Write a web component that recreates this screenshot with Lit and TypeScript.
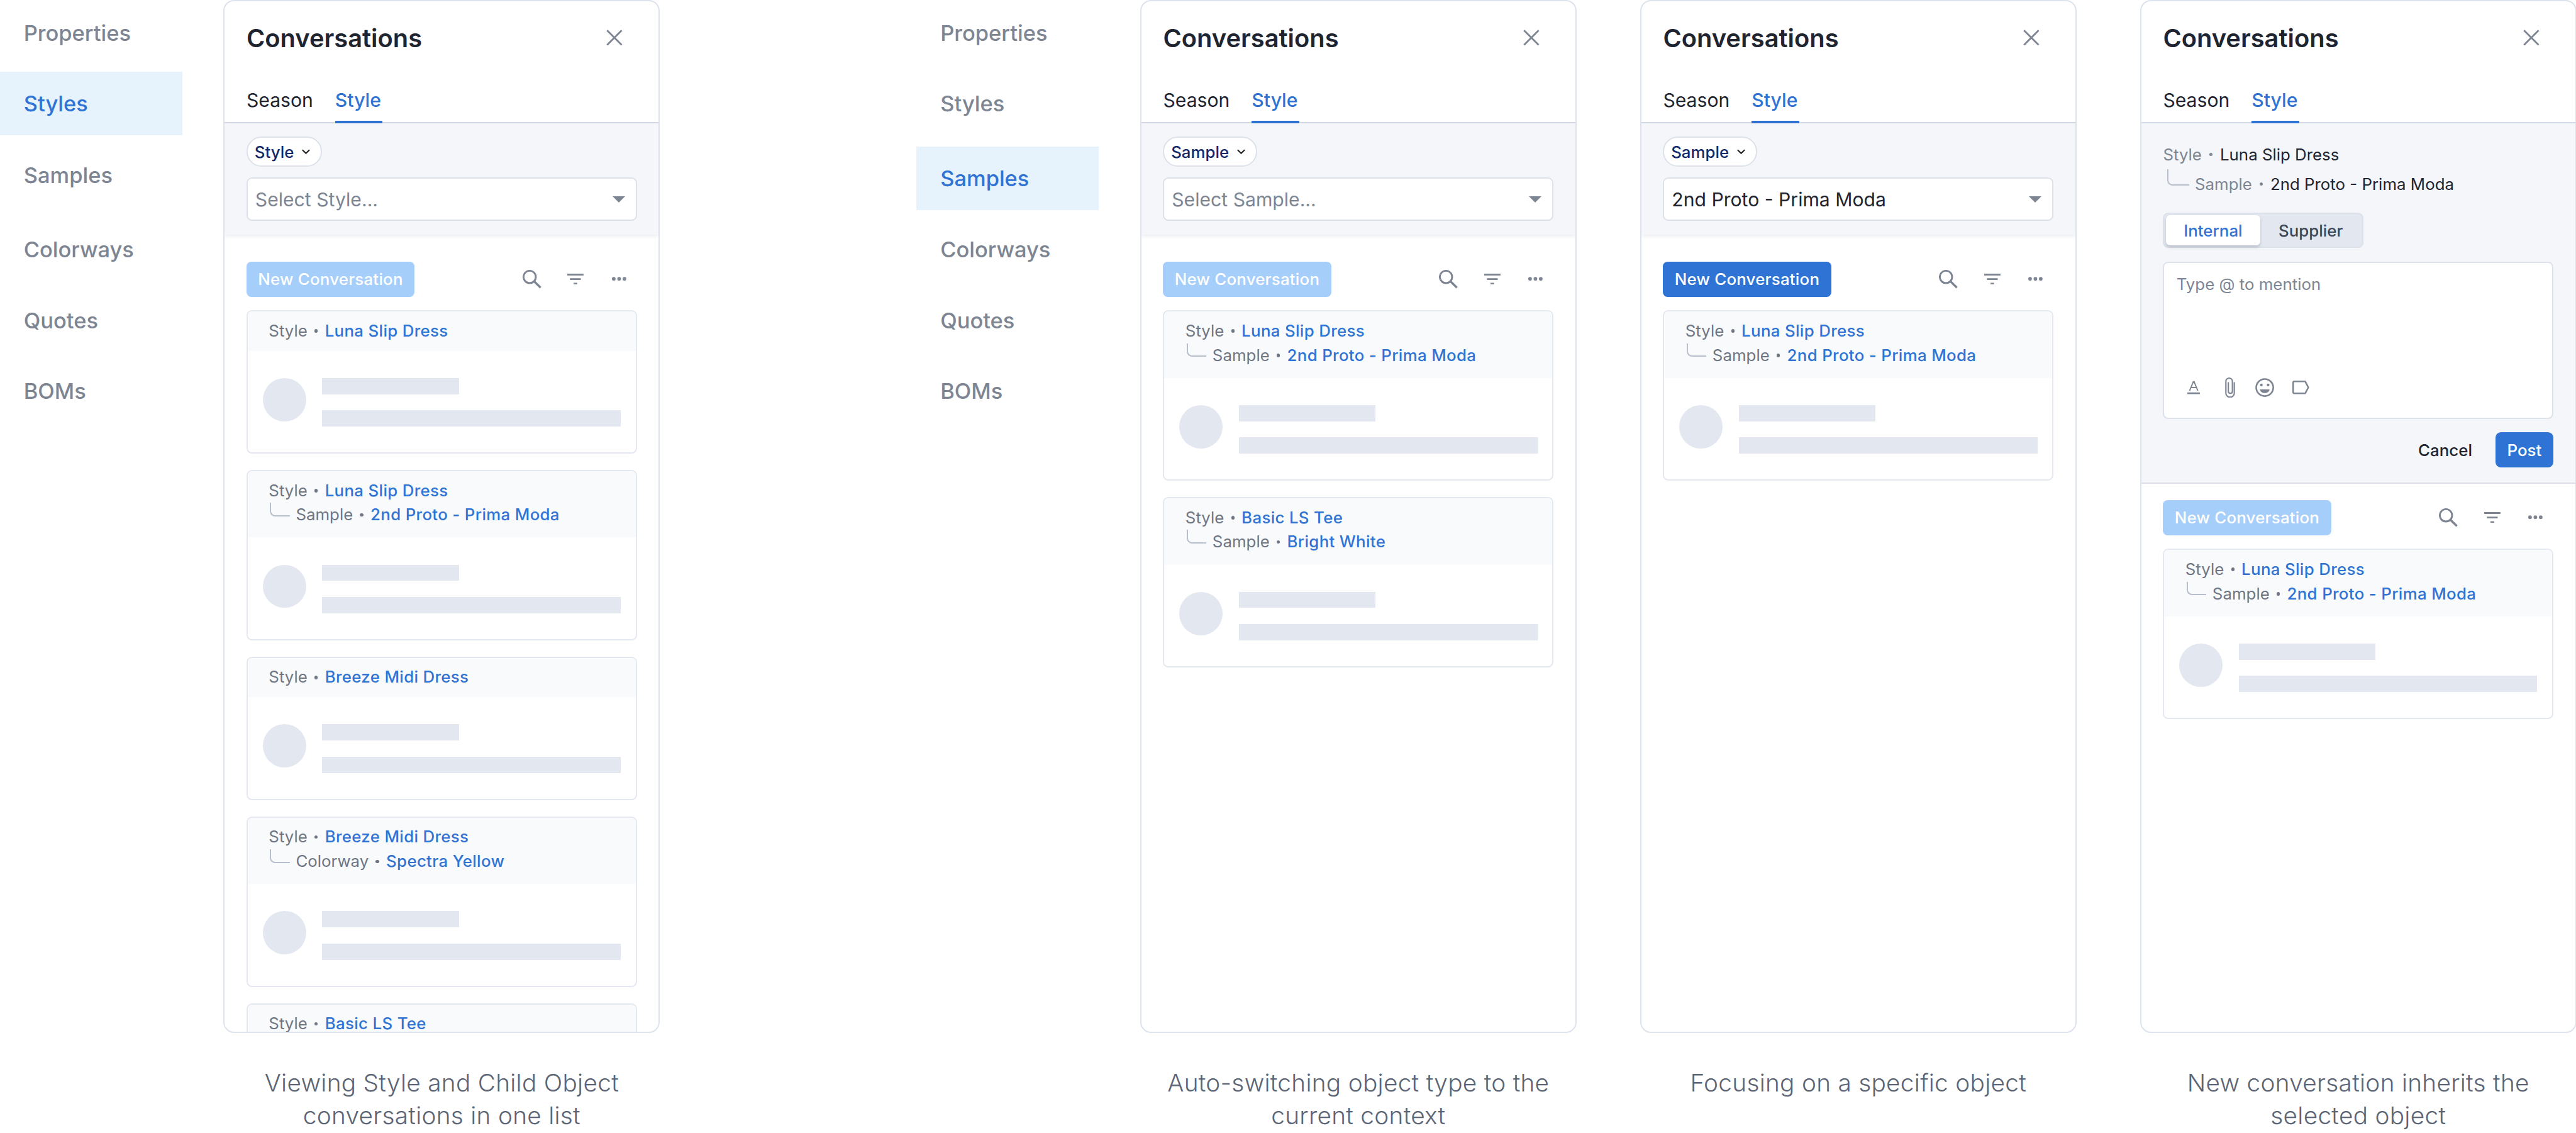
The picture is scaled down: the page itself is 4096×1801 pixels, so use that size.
import { LitElement, html, css, nothing } from "lit";
import { customElement } from "lit/decorators.js";

type Crumb = [string, string];
interface CardData { parent: Crumb; child?: Crumb }
interface PanelData {
  caption: string[];
  filter?: { type: string; value: string; placeholder: boolean };
  active: boolean;
  cards: CardData[];
}

const LUNA: Crumb = ["Style", "Luna Slip Dress"];
const PROTO: Crumb = ["Sample", "2nd Proto - Prima Moda"];

const close = html`<svg class="close" viewBox="0 0 12 12" width="12" height="12"><path d="M.6.6l10.8 10.8M11.4.6L.6 11.4" fill="none" stroke="#7d8593" stroke-width="1.3"/></svg>`;
const search = html`<svg class="i-search" viewBox="0 0 14 14" width="14" height="14"><circle cx="5.2" cy="5.2" r="4.55" fill="none" stroke="#7d8593" stroke-width="1.35"/><path d="M8.6 8.6l4.7 4.5" fill="none" stroke="#7d8593" stroke-width="1.6"/></svg>`;
const filterI = html`<svg class="i-filter" viewBox="0 0 12 8" width="12" height="8"><path d="M0 0h12v1.35H0zM2 3.35h8v1.35H2zM4.65 6.7h2.7V8h-2.7z" fill="#7d8593"/></svg>`;
const dots = html`<svg class="i-dots" viewBox="0 0 10.6 3" width="10.6" height="3"><circle cx="1.35" cy="1.5" r="1.35" fill="#7d8593"/><circle cx="5.3" cy="1.5" r="1.35" fill="#7d8593"/><circle cx="9.25" cy="1.5" r="1.35" fill="#7d8593"/></svg>`;
const chevron = html`<svg class="chev" viewBox="0 0 6 4" width="6" height="4"><path d="M.4.6L3 3.1 5.6.6" fill="none" stroke="#222" stroke-width="1"/></svg>`;
const fontI = html`<svg viewBox="0 0 9.4 10" width="9.4" height="10"><path d="M1.2 7.4L4.1.4h1.2l2.9 7h-1L6.5 5.6H2.9l-.7 1.8zM3.3 4.6h2.8L4.7 1.4zM0 8.7h9.4V10H0z" fill="#7d8593" fill-rule="evenodd"/></svg>`;
const clip = html`<svg viewBox="0 0 7.4 15" width="7.4" height="15"><path d="M6.8 3.5v8.1c0 1.7-1.4 3-3.1 3S.6 13.3.6 11.6V2.9C.6 1.5 1.7.5 3 .5s2.4 1 2.4 2.4v7.3c0 .8-.6 1.5-1.5 1.5s-1.5-.7-1.5-1.5V3.5" fill="none" stroke="#7d8593" stroke-width="1"/></svg>`;
const smile = html`<svg viewBox="0 0 14 14" width="14" height="14"><circle cx="7" cy="7" r="6.3" fill="none" stroke="#7d8593" stroke-width="1.2"/><circle cx="4.5" cy="5.1" r="1" fill="#7d8593"/><circle cx="9.5" cy="5.1" r="1" fill="#7d8593"/><path d="M3.4 8.3h7.2C10.3 10 8.8 11 7 11S3.7 10 3.4 8.3z" fill="#7d8593"/></svg>`;
const tag = html`<svg viewBox="0 0 12.6 10" width="12.6" height="10"><path d="M1.3.6h8.2l2.3 4.4-2.3 4.4H1.3a.7.7 0 0 1-.7-.7V1.3a.7.7 0 0 1 .7-.7z" fill="none" stroke="#7d8593" stroke-width="1.2" stroke-linejoin="round"/></svg>`;

const PANELS: PanelData[] = [
  {
    caption: ["Viewing Style and Child Object", "conversations in one list"],
    filter: { type: "Style", value: "Select Style...", placeholder: true },
    active: false,
    cards: [
      { parent: LUNA },
      { parent: LUNA, child: PROTO },
      { parent: ["Style", "Breeze Midi Dress"] },
      { parent: ["Style", "Breeze Midi Dress"], child: ["Colorway", "Spectra Yellow"] },
      { parent: ["Style", "Basic LS Tee"] },
    ],
  },
  {
    caption: ["Auto-switching object type to the", "current context"],
    filter: { type: "Sample", value: "Select Sample...", placeholder: true },
    active: false,
    cards: [
      { parent: LUNA, child: PROTO },
      { parent: ["Style", "Basic LS Tee"], child: ["Sample", "Bright White"] },
    ],
  },
  {
    caption: ["Focusing on a specific object"],
    filter: { type: "Sample", value: "2nd Proto - Prima Moda", placeholder: false },
    active: true,
    cards: [{ parent: LUNA, child: PROTO }],
  },
  {
    caption: ["New conversation inherits the", "selected object"],
    active: false,
    cards: [{ parent: LUNA, child: PROTO }],
  },
];

const NAV = ["Properties", "Styles", "Samples", "Colorways", "Quotes", "BOMs"];

@customElement("app-root")
export class AppRoot extends LitElement {
  static styles = css`
    :host {
      display: block;
      zoom: 2.1545;
      width: 1901.1px;
      height: 836px;
      overflow: hidden;
      background: #fff;
      font-family: Inter, "Liberation Sans", sans-serif;
      color: #1e2430;
    }
    .page { display: flex; align-items: flex-start; width: 1901.1px; }
    .nav { width: 134.6px; flex: none; display: flex; flex-direction: column; padding-top: 1px; }
    .nav-item {
      height: 47px; flex: none; display: flex; align-items: center; padding-left: 17.5px;
      font-size: 16px; font-weight: 500; color: #7d8593;
    }
    .nav-item:nth-child(2) { margin-top: 5px; }
    .nav-item:nth-child(3) { margin-top: 6px; }
    .nav-item:nth-child(4) { margin-top: 7.5px; }
    .nav-item:nth-child(5) { margin-top: 5.5px; }
    .nav-item:nth-child(6) { margin-top: 5px; }
    .nav-item.on:nth-child(3) { margin-top: 8px; }
    .nav-item.on:nth-child(3) + .nav-item { margin-top: 5.5px; }
    .nav-item.on { background: #e6f2fc; color: #2f74d4; }
    .col { width: 322px; flex: none; }
    .m1 { margin-left: 30.4px; }
    .m2 { margin-left: 189.5px; }
    .m3 { margin-left: 47px; }
    .panel {
      height: 762px; box-sizing: border-box; border: 1px solid #dde3ec; border-radius: 8px;
      overflow: hidden; display: flex; flex-direction: column; background: #fff;
    }
    .head { height: 54px; flex: none; display: flex; align-items: center; justify-content: space-between; padding: 0 26.5px 0 16px; }
    .title { font-size: 18.5px; font-weight: 600; color: #1e2430; }
    .close { display: block; }
    .tabs {
      height: 36px; flex: none; box-sizing: border-box; display: flex; gap: 15.2px; align-items: flex-end;
      padding: 0 16px; border-bottom: 1px solid #d5dbe6;
    }
    .tab { font-size: 14px; line-height: 20px; padding: 0 1px 5px 0; border-bottom: 2px solid transparent; margin-bottom: -1px; color: #1e2430; }
    .tab.on { color: #2f74d4; font-weight: 500; border-bottom-color: #2f74d4; padding: 0 1px 5px 0; }
    .filter {
      flex: none; background: #f4f6fa; padding: 10px 16px; box-shadow: 0 1px 3px rgba(30, 40, 70, .1);
      position: relative; z-index: 1;
    }
    .pill {
      display: inline-flex; align-items: center; gap: 6px; height: 22px; box-sizing: border-box;
      background: #fff; border: 1px solid #dde2ea; border-radius: 11px; padding: 0 8px 0 5px;
      font-size: 12px; font-weight: 500; color: #13296a; vertical-align: top;
    }
    .chev { display: block; }
    .select {
      margin-top: 8px; height: 32px; box-sizing: border-box; background: #fff; border: 1px solid #dde2ea; border-radius: 4px;
      display: flex; align-items: center; justify-content: space-between; padding: 0 8px 0 5.5px;
      font-size: 14px; color: #1e2430;
    }
    .select.ph { color: #7d8593; }
    .caret { width: 0; height: 0; border-left: 4.8px solid transparent; border-right: 4.8px solid transparent; border-top: 4.8px solid #7d8593; }
    .compose {
      flex: none; background: #f4f6fa; padding: 12px 16px 11px; border-bottom: 1px solid #dde2ea;
    }
    .crumb-lg { font-size: 12px; line-height: 22px; height: 22px; display: flex; color: #7d8593; }
    .crumb-lg b { font-weight: 400; color: #1e2430; }
    .seg {
      margin-top: 10px; width: 148px; height: 26px; box-sizing: border-box; display: flex; align-items: center;
      background: #e3e7f0; border: 1px solid #dde1ea; border-radius: 4px; padding: 0 1px; font-size: 12px; font-weight: 500;
    }
    .seg span { height: 22px; display: flex; align-items: center; justify-content: center; }
    .seg .a { width: 70px; background: #fff; color: #2f74d4; border-radius: 3px; box-shadow: 0 1px 2px rgba(30, 40, 70, .2); }
    .seg .b { flex: 1; color: #3d4657; }
    .box {
      margin-top: 10px; height: 116px; box-sizing: border-box; background: #fff; border: 1px solid #dde2ea; border-radius: 4px;
      padding: 7px 9px 14px; display: flex; flex-direction: column; justify-content: space-between;
      font-size: 12px; line-height: 18px; color: #7d8593;
    }
    .tools { display: flex; align-items: center; height: 16px; margin-left: 8px; }
    .tools svg { display: block; flex: none; }
    .tools svg:nth-child(2) { margin-left: 18.3px; }
    .tools svg:nth-child(3) { margin-left: 15px; }
    .tools svg:nth-child(4) { margin-left: 13.3px; }
    .actions { margin-top: 10px; display: flex; justify-content: flex-end; align-items: center; gap: 17px; font-size: 12px; font-weight: 500; color: #1e2430; }
    .post { width: 43px; height: 26px; border-radius: 4px; background: #2f74d4; color: #fff; display: flex; align-items: center; justify-content: center; }
    .list { flex: 1; min-height: 0; overflow: hidden; padding: 20px 16px 0; }
    .list.tight { padding-top: 12px; }
    .bar { display: flex; align-items: center; height: 26px; }
    .new {
      height: 26px; width: 124px; box-sizing: border-box; border-radius: 3.5px; background: #a6cefa; color: #fff;
      font-size: 12px; font-weight: 500; letter-spacing: .1px; display: flex; align-items: center; justify-content: center;
    }
    .new.on { background: #2f74d4; }
    .bar-icons { margin-left: auto; display: flex; align-items: center; padding-right: 8px; }
    .bar-icons svg { display: block; }
    .i-filter { margin-left: 19.2px; }
    .i-dots { margin-left: 20.7px; }
    .card {
      margin-top: 10px; box-sizing: border-box; border: 1px solid #e4e8f0; border-radius: 4px; overflow: hidden; background: #fff;
    }
    .card + .card { margin-top: 12px; }
    .chead { background: #f9fafc; padding: 5.4px 15.5px 5.6px; font-size: 12px; }
    .chead.two { padding-bottom: 7.6px; }
    .row { display: flex; height: 18px; line-height: 18px; color: #6f7683; }
    .row b { font-weight: 500; color: #2f74d4; letter-spacing: .15px; }
    .sep { width: 2.5px; height: 2.5px; border-radius: 50%; background: #6f7683; margin: auto 5.2px; flex: none; }
    .crumb-lg .sep { background: #7d8593; margin: auto 5.5px; }
    .link { flex: none; box-sizing: border-box; align-self: flex-start; height: calc(50% + 1px); border-left: 1px solid #b8bfcc; border-bottom: 1px solid #b8bfcc; border-bottom-left-radius: 4px; }
    .row .link { width: 14.5px; margin: 0 4.5px 0 1px; }
    .crumb-lg .link { width: 16.5px; margin: 0 4px 0 3px; }
    .cbody { display: flex; gap: 12px; padding: 20px 11px 19px; }
    .avatar { width: 32px; height: 32px; border-radius: 50%; background: #e3e7f0; flex: none; }
    .lines { flex: 1; }
    .sk { height: 12px; background: #e3e7f0; }
    .sk.s { width: 101px; }
    .sk.l { margin-top: 12px; }
    .caption { margin: 24.5px 0 0; text-align: center; font-size: 18px; line-height: 24.5px; font-weight: 300; letter-spacing: .13px; color: #5c6575; }
    .caption div { white-space: nowrap; }
  `;

  private navList(active: string) {
    return html`<div class="nav">
      ${NAV.map((n) => html`<div class="nav-item ${n === active ? "on" : ""}">${n}</div>`)}
    </div>`;
  }

  private card(c: CardData) {
    return html`<div class="card">
      <div class="chead ${c.child ? "two" : ""}">
        <div class="row"><span>${c.parent[0]}</span><i class="sep"></i><b>${c.parent[1]}</b></div>
        ${c.child
          ? html`<div class="row"><i class="link"></i><span>${c.child[0]}</span><i class="sep"></i><b>${c.child[1]}</b></div>`
          : nothing}
      </div>
      <div class="cbody">
        <div class="avatar"></div>
        <div class="lines"><div class="sk s"></div><div class="sk l"></div></div>
      </div>
    </div>`;
  }

  private panel(p: PanelData, margin: string) {
    return html`<div class="col ${margin}">
      <div class="panel">
        <div class="head"><div class="title">Conversations</div>${close}</div>
        <div class="tabs"><div class="tab">Season</div><div class="tab on">Style</div></div>
        ${p.filter
          ? html`<div class="filter">
              <div class="pill">${p.filter.type}${chevron}</div>
              <div class="select ${p.filter.placeholder ? "ph" : ""}"><span>${p.filter.value}</span><i class="caret"></i></div>
            </div>`
          : html`<div class="compose">
              <div class="crumb-lg"><span>Style</span><i class="sep"></i><b>Luna Slip Dress</b></div>
              <div class="crumb-lg"><i class="link"></i><span>Sample</span><i class="sep"></i><b>2nd Proto - Prima Moda</b></div>
              <div class="seg"><span class="a">Internal</span><span class="b">Supplier</span></div>
              <div class="box"><div>Type @ to mention</div><div class="tools">${fontI}${clip}${smile}${tag}</div></div>
              <div class="actions"><span>Cancel</span><span class="post">Post</span></div>
            </div>`}
        <div class="list ${p.filter ? "" : "tight"}">
          <div class="bar">
            <div class="new ${p.active ? "on" : ""}">New Conversation</div>
            <div class="bar-icons">${search}${filterI}${dots}</div>
          </div>
          ${p.cards.map((c) => this.card(c))}
        </div>
      </div>
      <div class="caption">${p.caption.map((l) => html`<div>${l}</div>`)}</div>
    </div>`;
  }

  render() {
    return html`<div class="page">
      ${this.navList("Styles")}
      ${this.panel(PANELS[0], "m1")}
      <div class="m2">${this.navList("Samples")}</div>
      ${this.panel(PANELS[1], "m1")}
      ${this.panel(PANELS[2], "m3")}
      ${this.panel(PANELS[3], "m3")}
    </div>`;
  }
}
